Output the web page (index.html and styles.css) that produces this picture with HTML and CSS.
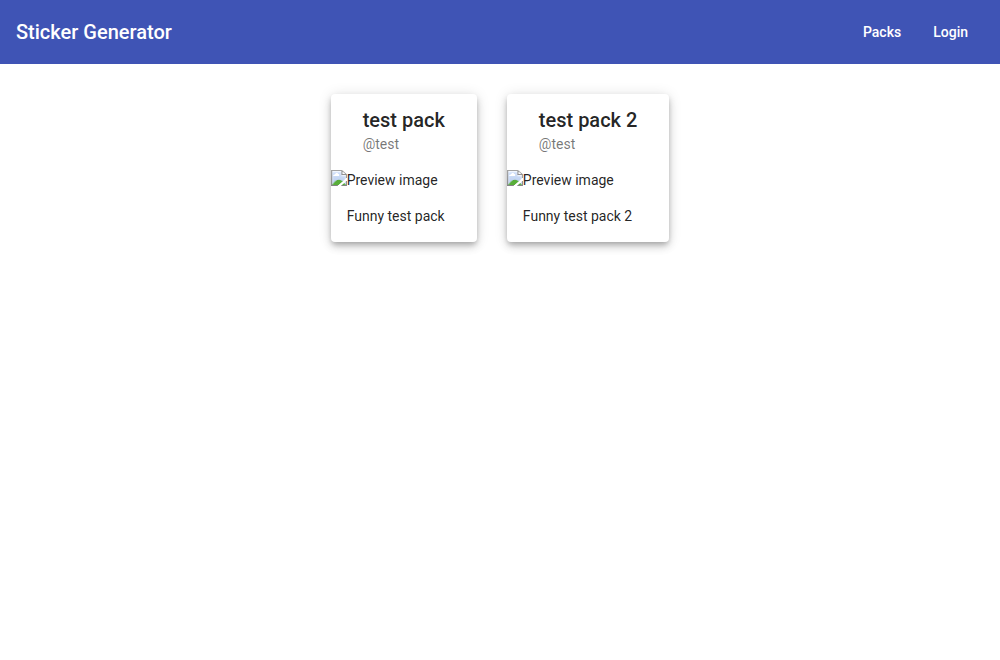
FILE: index.html
```html
<!DOCTYPE html>
<html lang="en">
<head>
<meta charset="utf-8">
<title>Sticker Generator</title>
<link rel="stylesheet" href="styles.css">
</head>
<body>
<header class="toolbar">
  <h1 class="brand">Sticker Generator</h1>
  <nav class="nav">
    <a class="nav-link" href="#packs">Packs</a>
    <a class="nav-link" href="#login">Login</a>
  </nav>
</header>
<main class="packs">
  <article class="card">
    <header class="card-header">
      <h2 class="card-title">test pack</h2>
      <p class="card-subtitle">@test</p>
    </header>
    <img class="card-image" src="preview-1.svg" alt="Preview image">
    <p class="card-content">Funny test pack</p>
  </article>
  <article class="card">
    <header class="card-header">
      <h2 class="card-title">test pack 2</h2>
      <p class="card-subtitle">@test</p>
    </header>
    <img class="card-image" src="preview-2.svg" alt="Preview image">
    <p class="card-content">Funny test pack 2</p>
  </article>
</main>
</body>
</html>
```
FILE: styles.css
```css
* { box-sizing: border-box; }
body {
  margin: 0;
  font-family: Roboto, sans-serif;
  font-size: 14px;
  line-height: 20px;
  color: rgba(0, 0, 0, 0.87);
  background: #fff;
}
h1, h2, p { margin: 0; }
.toolbar {
  display: flex;
  align-items: center;
  justify-content: space-between;
  height: 64px;
  padding: 0 16px;
  background: #3f54b5;
  color: #fff;
}
.brand { font-size: 20px; font-weight: 500; line-height: 32px; }
.nav { display: flex; }
.nav-link {
  padding: 0 16px;
  font-weight: 500;
  line-height: 36px;
  color: inherit;
  text-decoration: none;
}
.packs {
  display: flex;
  flex-wrap: wrap;
  justify-content: center;
  gap: 30px;
  padding: 30px;
}
.card {
  padding: 16px 0;
  border-radius: 4px;
  background: #fff;
  box-shadow: 0 3px 5px -1px rgba(0, 0, 0, 0.2), 0 5px 8px 0 rgba(0, 0, 0, 0.14), 0 1px 14px 0 rgba(0, 0, 0, 0.12);
}
.card-header { padding: 0 32px; margin-bottom: 16px; }
.card-title { font-size: 20px; font-weight: 500; line-height: 20px; margin-bottom: 4px; }
.card-subtitle { color: rgba(0, 0, 0, 0.54); }
.card-image { display: block; width: 100%; margin-bottom: 16px; }
.card-content { padding: 0 16px; }
```
